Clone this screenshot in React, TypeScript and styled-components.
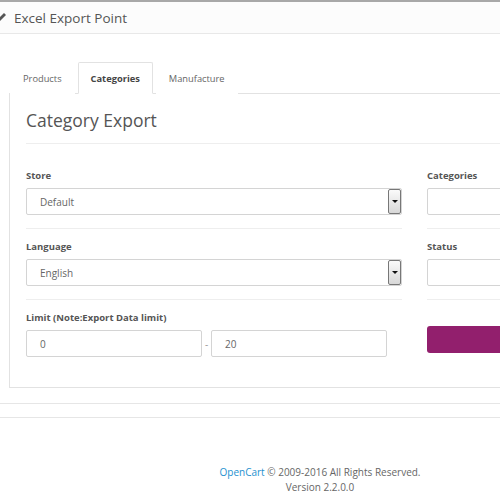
import styled, { createGlobalStyle } from "styled-components";

const Global = createGlobalStyle`
  html, body {
    margin: 0;
    padding: 0;
    background: #ffffff;
    overflow: hidden;
  }
  body {
    font-family: "Open Sans", "Liberation Sans", sans-serif;
    font-size: 10px;
    color: #666;
  }
`;

const Page = styled.div`
  width: 640px;
`;

const Panel = styled.div`
  border-top: 2px solid #a8a8a8;
  border-bottom: 1px solid #e6e6e6;
`;

const Heading = styled.div`
  height: 31px;
  display: flex;
  align-items: center;
  gap: 8px;
  background: #fcfcfc;
  border-bottom: 1px solid #e8e8e8;
  font-size: 13.5px;
  color: #555;
`;

const Body = styled.div`
  padding: 28px 0 15px 9px;
`;

const Tabs = styled.div`
  display: flex;
  height: 32px;
  padding-left: 1px;
  border-bottom: 1px solid #e2e2e2;
  box-sizing: border-box;
`;

const Tab = styled.div<{ $active?: boolean }>`
  padding: 0 12px;
  margin-right: 3px;
  display: flex;
  align-items: center;
  font-size: 9.3px;
  color: ${(p) => (p.$active ? "#444" : "#666")};
  font-weight: ${(p) => (p.$active ? 700 : 400)};
  background: #fff;
  border: 1px solid ${(p) => (p.$active ? "#e2e2e2" : "transparent")};
  border-bottom-color: ${(p) => (p.$active ? "#fff" : "transparent")};
  border-radius: 2px 2px 0 0;
  margin-bottom: -1px;
`;

const Pane = styled.div`
  border: 1px solid #e2e2e2;
  border-top: none;
  padding: 0 16px 30px;
`;

const Title = styled.h1`
  margin: 0;
  padding: 14px 0 11px;
  font-size: 17.5px;
  font-weight: 400;
  color: #555;
  border-bottom: 1px solid #eeeeee;
`;

const Grid = styled.div`
  display: grid;
  grid-template-columns: 376px 376px;
  column-gap: 25px;
  padding-top: 25px;
`;

const Group = styled.div<{ $last?: boolean }>`
  padding-bottom: ${(p) => (p.$last ? "0" : "13px")};
  margin-bottom: ${(p) => (p.$last ? "0" : "11px")};
  border-bottom: ${(p) => (p.$last ? "none" : "1px solid #eeeeee")};
`;

const Label = styled.div<{ $gap?: number }>`
  font-size: 9.5px;
  font-weight: 700;
  color: #555;
  height: 13px;
  line-height: 13px;
  margin-top: ${(p) => p.$gap ?? 0}px;
  margin-bottom: 6px;
`;

const Field = styled.div`
  height: 27px;
  box-sizing: border-box;
  border: 1px solid #d4d4d4;
  border-radius: 2px;
  display: flex;
  align-items: center;
  padding-left: 13px;
  font-size: 10px;
  color: #666;
  position: relative;
  flex: 1;
`;

const Arrow = styled.span`
  position: absolute;
  right: 0;
  top: 0;
  width: 13px;
  height: 25px;
  box-sizing: border-box;
  border: 1px solid #777;
  border-radius: 2px;
  background: linear-gradient(#fafafa, #d8d8d8);
  display: flex;
  align-items: center;
  justify-content: center;
  &::after {
    content: "";
    border-left: 3px solid transparent;
    border-right: 3px solid transparent;
    border-top: 3px solid #111;
  }
`;

const Range = styled.div`
  display: flex;
  align-items: center;
  width: 361px;
`;

const Dash = styled.span`
  width: 9px;
  text-align: center;
  color: #999;
  font-size: 10px;
`;

const Button = styled.div`
  margin-top: -4px;
  height: 27px;
  background: #921f6d;
  border-radius: 3px;
`;

const Footer = styled.div`
  border-top: 1px solid #e6e6e6;
  margin-top: 13px;
  padding-top: 47px;
  text-align: center;
  font-size: 10px;
  line-height: 15px;
  color: #666;
  a {
    color: #1e91cf;
    text-decoration: none;
  }
`;

export default function App() {
  return (
    <Page>
      <Global />
      <Panel>
        <Heading>
          <svg width="10" height="10" viewBox="0 0 10 10" style={{ marginLeft: -4 }}>
            <path d="M1 9 L2 6 L8 0 L10 2 L4 8 Z" fill="#555" />
          </svg>
          Excel Export Point
        </Heading>
        <Body>
          <Tabs>
            <Tab>Products</Tab>
            <Tab $active>Categories</Tab>
            <Tab>Manufacture</Tab>
          </Tabs>
          <Pane>
            <Title>Category Export</Title>
            <Grid>
              <div>
                <Group>
                  <Label>Store</Label>
                  <Field>
                    Default
                    <Arrow />
                  </Field>
                </Group>
                <Group>
                  <Label>Language</Label>
                  <Field>
                    English
                    <Arrow />
                  </Field>
                </Group>
                <Group $last>
                  <Label $gap={1}>Limit (Note:Export Data limit)</Label>
                  <Range>
                    <Field>0</Field>
                    <Dash>-</Dash>
                    <Field>20</Field>
                  </Range>
                </Group>
              </div>
              <div>
                <Group>
                  <Label>Categories</Label>
                  <Field />
                </Group>
                <Group>
                  <Label>Status</Label>
                  <Field />
                </Group>
                <Group $last>
                  <Label $gap={1}>&nbsp;</Label>
                  <Button />
                </Group>
              </div>
            </Grid>
          </Pane>
        </Body>
      </Panel>
      <Footer>
        <a>OpenCart</a> © 2009-2016 All Rights Reserved.
        <br />
        Version 2.2.0.0
      </Footer>
    </Page>
  );
}
